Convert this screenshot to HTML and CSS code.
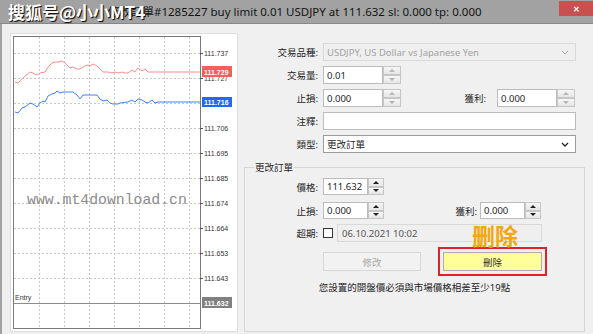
FILE: index.html
```html
<!DOCTYPE html>
<html lang="zh-Hant">
<head>
    <meta charset="UTF-8">
    <title>修改訂單</title>
    <link rel="stylesheet" href="styles.css">
</head>
<body>
<div class="window">
    <div class="titlebar">
        <span class="title">修改訂單#1285227 buy limit 0.01 USDJPY at 111.632 sl: 0.000 tp: 0.000</span>
        <span class="close">✕</span>
    </div>

    <div class="main">
        <!-- tick chart -->
        <div class="chart">
            <svg width="228" height="299" viewBox="10 33 228 299">
                <rect x="10.5" y="33.5" width="227" height="298" fill="#fff" stroke="#dedede"/>
                <g stroke="#c8c8c8" stroke-dasharray="2 2">
                    <line x1="39.5" y1="37" x2="39.5" y2="328"/>
                    <line x1="64.5" y1="37" x2="64.5" y2="328"/>
                    <line x1="89.5" y1="37" x2="89.5" y2="328"/>
                    <line x1="114.5" y1="37" x2="114.5" y2="328"/>
                    <line x1="139.5" y1="37" x2="139.5" y2="328"/>
                    <line x1="164.5" y1="37" x2="164.5" y2="328"/>
                    <line x1="189.5" y1="37" x2="189.5" y2="328"/>
                    <line x1="14" y1="53.5" x2="200" y2="53.5"/>
                    <line x1="14" y1="78.5" x2="200" y2="78.5"/>
                    <line x1="14" y1="103.5" x2="200" y2="103.5"/>
                    <line x1="14" y1="128.5" x2="200" y2="128.5"/>
                    <line x1="14" y1="153.5" x2="200" y2="153.5"/>
                    <line x1="14" y1="178.5" x2="200" y2="178.5"/>
                    <line x1="14" y1="203.5" x2="200" y2="203.5"/>
                    <line x1="14" y1="228.5" x2="200" y2="228.5"/>
                    <line x1="14" y1="253.5" x2="200" y2="253.5"/>
                    <line x1="14" y1="278.5" x2="200" y2="278.5"/>
                </g>
                <rect x="13.5" y="36.5" width="187" height="292" fill="none" stroke="#7a7a7a"/>
                <g stroke="#555">
                    <line x1="200" y1="53.5" x2="203" y2="53.5"/>
                    <line x1="200" y1="78.5" x2="203" y2="78.5"/>
                    <line x1="200" y1="128.5" x2="203" y2="128.5"/>
                    <line x1="200" y1="153.5" x2="203" y2="153.5"/>
                    <line x1="200" y1="178.5" x2="203" y2="178.5"/>
                    <line x1="200" y1="203.5" x2="203" y2="203.5"/>
                    <line x1="200" y1="228.5" x2="203" y2="228.5"/>
                    <line x1="200" y1="253.5" x2="203" y2="253.5"/>
                    <line x1="200" y1="278.5" x2="203" y2="278.5"/>
                </g>
                <g class="axis">
                    <text x="204" y="56">111.737</text>
                    <text x="204" y="81">111.727</text>
                    <text x="204" y="131">111.706</text>
                    <text x="204" y="156">111.695</text>
                    <text x="204" y="181">111.685</text>
                    <text x="204" y="206">111.674</text>
                    <text x="204" y="231">111.664</text>
                    <text x="204" y="256">111.653</text>
                    <text x="204" y="281">111.643</text>
                </g>

                <text class="site" x="27" y="204">www.mt4download.cn</text>

                <polyline fill="none" stroke="#ff8c8c" points="15,82 18,83 22,79 25,76 30,72 33,73 37,75 40,73 45,72 48,67 52,63 55,62 58,62 62,61 65,63 70,68 73,67 77,69 80,69 83,67 87,65 90,66 93,64 97,66 100,69 103,72 108,72 112,73 115,72 118,73 122,72 125,73 128,73 132,70 135,72 138,68 142,71 145,69 148,72 200,72"/>
                <polyline fill="none" stroke="#3d82f5" points="15,112 18,113 22,108 25,107 30,103 33,104 37,107 40,103 43,101 45,102 48,96 52,94 55,93 57,91 60,93 63,92 73,92 77,95 80,99 83,95 97,95 100,99 103,101 107,100 110,103 113,104 118,104 120,103 128,102 132,100 135,102 138,99 142,100 145,102 148,103 152,100 155,103 158,102 200,102"/>

                <line x1="14" y1="303.5" x2="200" y2="303.5" stroke="#8c8c8c"/>
                <text class="axis-note" x="15" y="300">Entry</text>

                <rect x="202" y="66" width="30" height="11" fill="#ff5c5c"/>
                <text class="tag" x="204" y="74.5">111.729</text>
                <rect x="202" y="97" width="30" height="10" fill="#2267ff"/>
                <text class="tag" x="204" y="105">111.716</text>
                <rect x="202" y="297" width="30" height="11" fill="#808080"/>
                <text class="tag" x="204" y="305.5">111.632</text>
            </svg>
        </div>

        <!-- order form -->
        <div class="form">
            <div class="row">
                <span class="lbl">交易品種:</span>
                <div class="field select off w-full">
                    <span>USDJPY, US Dollar vs Japanese Yen</span>
                    <svg class="chev" width="8" height="5" viewBox="0 0 8 5"><polyline points="1,1 4,4 7,1" fill="none" stroke="#a8a8a8"/></svg>
                </div>
            </div>
            <div class="row">
                <span class="lbl">交易量:</span>
                <div class="field w-num">0.01</div>
                <div class="spin"><span class="up"></span><span class="dn"></span></div>
            </div>
            <div class="row">
                <span class="lbl">止損:</span>
                <div class="pair">
                    <div class="cell">
                        <div class="field w-num">0.000</div>
                        <div class="spin"><span class="up"></span><span class="dn"></span></div>
                    </div>
                    <div class="cell">
                        <span class="lbl-tp">獲利:</span>
                        <div class="field w-num">0.000</div>
                        <div class="spin"><span class="up"></span><span class="dn"></span></div>
                    </div>
                </div>
            </div>
            <div class="row">
                <span class="lbl">注釋:</span>
                <div class="field w-full"></div>
            </div>
            <div class="row last">
                <span class="lbl">類型:</span>
                <div class="field select dark w-full">
                    <span>更改訂單</span>
                    <svg class="chev" width="8" height="5" viewBox="0 0 8 5"><polyline points="1,1 4,4 7,1" fill="none" stroke="#222" stroke-width="1.3"/></svg>
                </div>
            </div>

            <fieldset class="group">
                <legend>更改訂單</legend>
                <div class="row g-price">
                    <span class="lbl">價格:</span>
                    <div class="field w-small">111.632</div>
                    <div class="spin on small"><span class="up"></span><span class="dn"></span></div>
                </div>
                <div class="row g-sl">
                    <span class="lbl">止損:</span>
                    <div class="pair narrow">
                        <div class="cell">
                            <div class="field w-small">0.000</div>
                            <div class="spin on small"><span class="up"></span><span class="dn"></span></div>
                        </div>
                        <div class="cell">
                            <span class="lbl-tp tight">獲利:</span>
                            <div class="field w-small">0.000</div>
                            <div class="spin on small"><span class="up"></span><span class="dn"></span></div>
                        </div>
                    </div>
                </div>
                <div class="row g-exp">
                    <span class="lbl">超期:</span>
                    <span class="check"></span>
                    <div class="field off date">06.10.2021 10:02</div>
                </div>
                <div class="buttons">
                    <button class="btn" disabled>修改</button>
                    <button class="btn del">刪除</button>
                </div>
                <p class="msg">您設置的開盤價必須與市場價格相差至少19點</p>
            </fieldset>
        </div>
    </div>

    <!-- overlays pasted on the screenshot -->
    <span class="stamp">搜狐号@小小MT4</span>
    <span class="note">删除</span>
</div>
</body>
</html>
```

FILE: styles.css
```css
/* Page */
body {
    margin: 0;
    background-color: #f0f0f0;
    font-family: "Noto Sans", "Noto Sans CJK TC", sans-serif;
    font-size: 9.5px;
    color: #1e1e1e;
    overflow: hidden;
}

.window {
    position: relative;
    width: 593px;
    height: 334px;
}

/* Title bar */
.titlebar {
    display: flex;
    align-items: flex-start;
    height: 23px;
    background-color: #a2a2a2;
    border-bottom: 1px solid #868686;
}

.title {
    padding-left: 108px;
    font-size: 11.5px;
    line-height: 23px;
    color: #141414;
    white-space: nowrap;
}

.close {
    margin-left: auto;
    margin-top: 1px;
    width: 34px;
    height: 15px;
    background-color: #c75050;
    color: #fff;
    font-size: 8px;
    font-weight: bold;
    line-height: 15px;
    text-align: center;
}

/* Body */
.main {
    display: flex;
    height: 310px;
    border-left: 2px solid #a2a2a2;
}

.chart {
    margin: 9px 0 0 8px;
    width: 228px;
    height: 299px;
}

.chart svg {
    display: block;
}

.axis text,
.axis-note {
    font-family: "Liberation Sans", sans-serif;
    font-size: 7px;
    fill: #333;
}

.tag {
    font-family: "Liberation Sans", sans-serif;
    font-size: 7px;
    font-weight: bold;
    fill: #fff;
}

.site {
    font-family: "Liberation Mono", monospace;
    font-size: 14.8px;
    fill: #8c8c8c;
}

/* Form */
.form {
    margin-left: 6px;
    width: 341px;
    padding-top: 19px;
}

.row {
    display: flex;
    align-items: center;
    height: 18px;
    margin-bottom: 5px;
}

.row.last {
    margin-bottom: 0;
}

.lbl {
    flex: none;
    width: 74px;
    margin-right: 5px;
    text-align: right;
    white-space: nowrap;
}

.field {
    box-sizing: border-box;
    display: flex;
    align-items: center;
    height: 18px;
    padding-left: 3px;
    background-color: #fff;
    border: 1px solid #bcbcbc;
    white-space: nowrap;
}

.w-full { width: 253px; }
.w-num { width: 60px; }
.w-small { width: 45px; height: 17px; }

.select {
    justify-content: space-between;
    padding-right: 6px;
}

.select.off {
    background-color: #efefef;
    border-color: #d9d9d9;
    color: #a2a2a2;
}

.select.dark {
    border-color: #9c9c9c;
}

.field.off {
    background-color: #efefef;
    border-color: #d9d9d9;
}

/* Spin buttons */
.spin {
    flex: none;
    display: flex;
    flex-direction: column;
    width: 18px;
    height: 18px;
}

.spin.small {
    width: 16px;
    height: 17px;
}

.spin span {
    box-sizing: border-box;
    flex: 1;
    display: flex;
    align-items: center;
    justify-content: center;
    border: 1px solid #c6c6c6;
    background: linear-gradient(#f7f7f7, #e5e5e5);
}

.spin .up::before,
.spin .dn::before {
    content: "";
    border-left: 3px solid transparent;
    border-right: 3px solid transparent;
}

.spin .up::before { border-bottom: 3px solid #b4b4b4; }
.spin .dn::before { border-top: 3px solid #b4b4b4; }
.spin.on .up::before { border-bottom-color: #202020; }
.spin.on .dn::before { border-top-color: #202020; }

.pair {
    display: flex;
    justify-content: space-between;
    width: 252px;
}

.pair.narrow {
    width: 218px;
}

.cell {
    display: flex;
    align-items: center;
}

.lbl-tp {
    margin-right: 11px;
}

.lbl-tp.tight {
    margin-right: 3px;
}

/* Group box */
.group {
    box-sizing: border-box;
    margin: 8px 0 0;
    padding: 0;
    width: 341px;
    height: 171px;
    border: 1px solid #d6d6d6;
}

.group legend {
    margin-left: 9px;
    padding: 0 1px;
    line-height: 13px;
}

.group .lbl {
    width: 73px;
}

.g-price {
    margin-top: 4px;
    height: 17px;
    margin-bottom: 7px;
}

.g-sl {
    height: 17px;
    margin-bottom: 5px;
}

.check {
    box-sizing: border-box;
    width: 10px;
    height: 10px;
    margin-right: 4px;
    background-color: #fff;
    border: 1px solid #333;
}

.date {
    width: 205px;
    padding-left: 4px;
    color: #555;
}

/* Buttons */
.buttons {
    display: flex;
    gap: 22px;
    margin: 10px 0 0 78px;
}

.btn {
    box-sizing: border-box;
    height: 19px;
    padding: 0;
    font-family: "Noto Sans CJK TC", sans-serif;
    font-size: 9.5px;
    border: 1px solid #d8d8d8;
    background-color: #f2f2f2;
    color: #a8a8a8;
}

.btn:first-child { width: 98px; }

.btn.del {
    width: 99px;
    background-color: #ffff99;
    border-color: #adadad;
    color: #333;
    outline: 2px solid #e0232b;
    outline-offset: 3px;
}

.msg {
    margin: 10px 0 0;
    line-height: 13px;
    text-align: center;
    color: #222;
}

/* Overlays */
.stamp {
    position: absolute;
    left: 8px;
    top: 2px;
    font-family: "Noto Sans CJK SC", sans-serif;
    font-size: 17px;
    font-weight: bold;
    line-height: 20px;
    color: #fff;
    text-shadow: 1px 1px 1px #000;
}

.note {
    position: absolute;
    left: 472px;
    top: 224px;
    font-family: "Noto Sans CJK SC", sans-serif;
    font-size: 23px;
    font-weight: bold;
    line-height: 23px;
    color: #f5a60a;
}
```
